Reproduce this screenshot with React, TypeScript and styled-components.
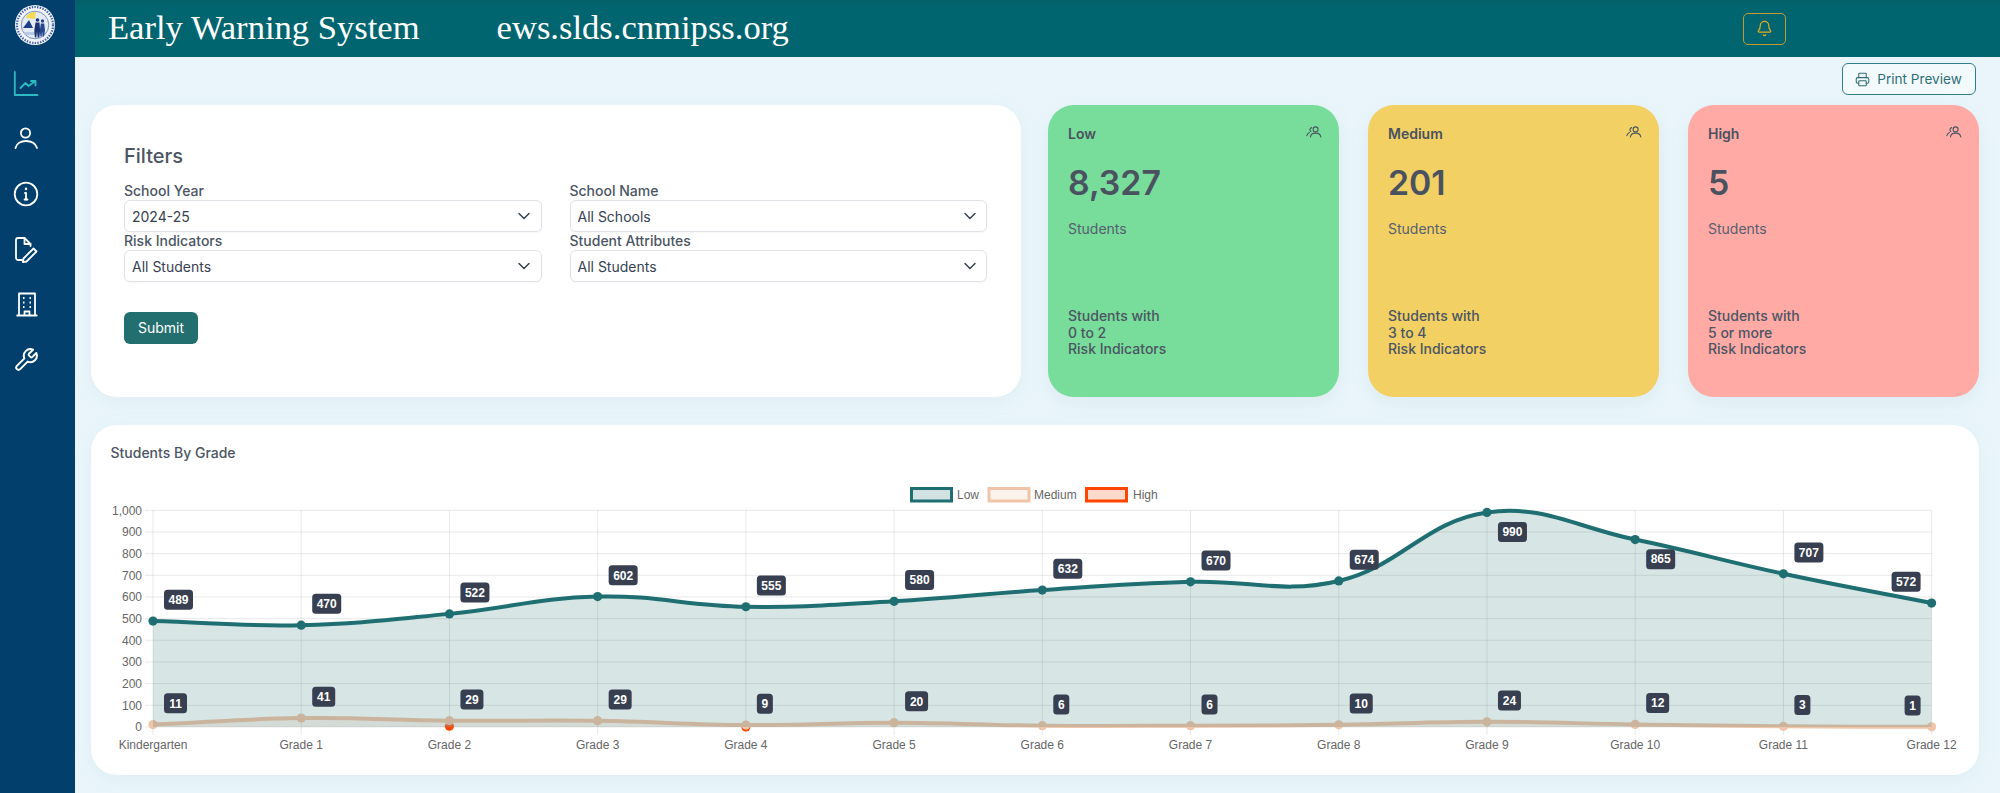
import React from "react";
import styled, { createGlobalStyle } from "styled-components";
import { Bell, Printer, ChevronDown } from "lucide-react";

const Global = createGlobalStyle`
  html, body { margin: 0; padding: 0; height: 100%; }
  body { background: #e9f5fa; font-family: Inter, "Liberation Sans", sans-serif; overflow: hidden; }
`;

const Shell = styled.div`
  display: flex;
  width: 2000px;
  height: 793px;
  background: #e9f5fa;
`;

const Sidebar = styled.aside`
  flex: 0 0 75px;
  background: #023f6d;
  padding-top: 4.5px;
  box-sizing: border-box;
`;

const Seal = styled.svg`
  display: block;
  width: 40px;
  height: 40px;
  margin-left: 15px;
`;

const Nav = styled.nav`
  display: flex;
  flex-direction: column;
  gap: 29.2px;
  margin-top: 26.5px;
  padding-left: 12.5px;
`;

const NavIcon = styled.svg<{ $active?: boolean }>`
  display: block;
  width: 26px;
  height: 26px;
  fill: none;
  stroke: ${(p) => (p.$active ? "#2fb9c0" : "#ffffff")};
  stroke-width: 1.8;
  stroke-linecap: round;
  stroke-linejoin: round;
`;

const Main = styled.main`
  flex: 1;
  min-width: 0;
  display: flex;
  flex-direction: column;
`;

const Header = styled.header`
  height: 57px;
  flex: none;
  display: flex;
  align-items: center;
  background: linear-gradient(180deg, #055f69 0%, #00656f 12%, #00656f 100%);
  padding: 0 214.5px 4px 33px;
  box-sizing: border-box;
`;

const HeaderTitle = styled.span<{ $offset?: number }>`
  font-family: "Liberation Serif", "Times New Roman", serif;
  font-size: 34.6px;
  line-height: 40px;
  color: #ffffff;
  margin-left: ${(p) => p.$offset ?? 0}px;
`;

const BellButton = styled.button`
  margin-left: auto;
  width: 43px;
  height: 32px;
  margin-top: 4px;
  display: flex;
  align-items: center;
  justify-content: center;
  background: transparent;
  border: 1px solid #c39a2c;
  border-radius: 5px;
  color: #e6ad24;
  padding: 0;
`;

const Content = styled.div`
  flex: 1;
  padding: 6px 21px 0 16px;
  display: flex;
  flex-direction: column;
`;

const Toolbar = styled.div`
  height: 42px;
  flex: none;
  display: flex;
  justify-content: flex-end;
  align-items: flex-start;
  padding-right: 3.5px;
`;

const PrintButton = styled.button`
  width: 134px;
  height: 32px;
  display: flex;
  align-items: center;
  justify-content: center;
  gap: 7px;
  background: #f3fafc;
  border: 1px solid #2f7f86;
  border-radius: 6px;
  color: #2e6f76;
  font-family: Inter, "Liberation Sans", sans-serif;
  font-size: 13.6px;
  padding: 0;
`;

const TopRow = styled.div`
  display: flex;
  gap: 29px;
  height: 292px;
  flex: none;
`;

const FilterCard = styled.section`
  flex: 1;
  margin-right: -2px;
  background: #ffffff;
  border-radius: 26px;
  padding: 37px 34px 0 33px;
  box-sizing: border-box;
  box-shadow: 0 4px 20px rgba(120, 170, 190, 0.08);
`;

const FilterTitle = styled.h2`
  margin: 0;
  font-size: 20px;
  line-height: 28px;
  font-weight: 500;
  color: #4b5563;
`;

const FilterGrid = styled.div`
  display: grid;
  grid-template-columns: 1fr 1fr;
  column-gap: 28px;
  margin-top: 12px;
`;

const Field = styled.label`
  display: block;
`;

const FieldLabel = styled.span`
  display: block;
  font-size: 14px;
  line-height: 18px;
  font-weight: 500;
  color: #4b5563;
`;

const SelectBox = styled.div`
  position: relative;
  height: 32px;
  color: #374151;
`;

const Select = styled.select`
  appearance: none;
  width: 100%;
  height: 100%;
  box-sizing: border-box;
  border: 1px solid #e0e3e7;
  border-radius: 6px;
  background: #ffffff;
  padding: 0 28px 0 7px;
  font-family: Inter, "Liberation Sans", sans-serif;
  font-size: 14px;
  color: #374151;
  box-shadow: 0 1px 2px rgba(0, 0, 0, 0.04);
`;

const Chevron = styled(ChevronDown)`
  position: absolute;
  right: 7.5px;
  top: 6px;
  pointer-events: none;
`;

const SubmitButton = styled.button`
  display: block;
  margin-top: 29.5px;
  width: 74px;
  height: 32px;
  background: #236f70;
  border: none;
  border-radius: 6px;
  color: #ffffff;
  font-family: Inter, "Liberation Sans", sans-serif;
  font-size: 14px;
  padding: 0;
`;

const StatCard = styled.section<{ $bg: string }>`
  flex: 0 0 291px;
  height: 292px;
  box-sizing: border-box;
  display: flex;
  flex-direction: column;
  background: ${(p) => p.$bg};
  border-radius: 26px;
  padding: 19px 17px 39px 20px;
  color: #4b5563;
  box-shadow: 0 6px 18px rgba(120, 170, 190, 0.1);
`;

const StatHead = styled.div`
  display: flex;
  justify-content: space-between;
  align-items: flex-start;
  font-size: 14px;
  line-height: 20px;
  font-weight: 600;
  color: #4a5260;
`;

const StatIcon = styled.svg`
  width: 16px;
  height: 12px;
  margin-top: 2px;
  fill: none;
  stroke: #4b5563;
  stroke-width: 1.1;
  stroke-linecap: round;
`;

const StatValue = styled.div`
  margin-top: 19px;
  font-size: 33.8px;
  line-height: 40px;
  font-weight: 600;
  color: #4a5260;
`;

const StatUnit = styled.div`
  margin-top: 16px;
  font-size: 14px;
  line-height: 20px;
  color: #566070;
`;

const StatNote = styled.div`
  margin-top: auto;
  font-size: 14px;
  line-height: 16.7px;
  font-weight: 500;
  color: #4b5563;
`;

const ChartCard = styled.section`
  margin-top: 28px;
  height: 350px;
  flex: none;
  background: #ffffff;
  border-radius: 26px;
  padding-top: 18px;
  box-sizing: border-box;
  box-shadow: 0 4px 20px rgba(120, 170, 190, 0.08);
`;

const ChartTitle = styled.h3`
  margin: 0 0 12px 19.5px;
  font-size: 14px;
  line-height: 20px;
  font-weight: 500;
  color: #4b5563;
`;

const ChartSvg = styled.svg`
  display: block;
  width: 1888px;
  height: 300px;
`;

const AxisText = styled.text`
  font-family: "Liberation Sans", Arial, sans-serif;
  font-size: 12px;
  fill: #666666;
`;

const BadgeText = styled.text`
  font-family: "Liberation Sans", Arial, sans-serif;
  font-size: 12px;
  font-weight: 700;
  fill: #ffffff;
  text-anchor: middle;
`;

/* chart geometry, in page coordinates (the svg's viewBox starts at the card's corner) */
const PLOT = { left: 153, right: 1931.6, top: 510.3, bottom: 727 };
const xAt = (i: number) => PLOT.left + (i * (PLOT.right - PLOT.left)) / 12;
const yAt = (v: number) => PLOT.bottom - (v / 1000) * (PLOT.bottom - PLOT.top);

const GRADES = ["Kindergarten", "Grade 1", "Grade 2", "Grade 3", "Grade 4", "Grade 5", "Grade 6", "Grade 7", "Grade 8", "Grade 9", "Grade 10", "Grade 11", "Grade 12"];
const LOW = [489, 470, 522, 602, 555, 580, 632, 670, 674, 990, 865, 707, 572];
const MEDIUM = [11, 41, 29, 29, 9, 20, 6, 6, 10, 24, 12, 3, 1];
const BADGE_WIDTH: Record<number, number> = { 1: 16, 2: 23, 3: 29 };

type Pt = { x: number; y: number };

function splinePath(values: number[]): string {
  const pts: Pt[] = values.map((v, i) => ({ x: xAt(i), y: yAt(v) }));
  const t = 0.4;
  const ctrl = pts.map((cur, i) => {
    const prev = pts[Math.max(0, i - 1)];
    const next = pts[Math.min(pts.length - 1, i + 1)];
    const d01 = Math.hypot(cur.x - prev.x, cur.y - prev.y);
    const d12 = Math.hypot(next.x - cur.x, next.y - cur.y);
    const sum = d01 + d12 || 1;
    const fa = (t * d01) / sum;
    const fb = (t * d12) / sum;
    return {
      prev: { x: cur.x - fa * (next.x - prev.x), y: cur.y - fa * (next.y - prev.y) },
      next: { x: cur.x + fb * (next.x - prev.x), y: cur.y + fb * (next.y - prev.y) },
    };
  });
  let d = `M${pts[0].x} ${pts[0].y}`;
  for (let i = 1; i < pts.length; i++) {
    d += ` C${ctrl[i - 1].next.x} ${ctrl[i - 1].next.y} ${ctrl[i].prev.x} ${ctrl[i].prev.y} ${pts[i].x} ${pts[i].y}`;
  }
  return d;
}

const closeArea = (line: string) => `${line} L${PLOT.right} ${PLOT.bottom} L${PLOT.left} ${PLOT.bottom} Z`;

function Badge({ value, index, below }: { value: number; index: number; below?: boolean }) {
  const text = value.toString();
  const w = BADGE_WIDTH[text.length];
  const px = xAt(index);
  const py = yAt(value);
  const left = index === 12 ? px - 11 - w : px + 11;
  const cy = below ? py + 19.6 : py - 21.3;
  return (
    <g>
      <rect x={left} y={cy - 10} width={w} height={20} rx={3.5} fill="#373f50" />
      <BadgeText x={left + w / 2} y={cy + 4.3}>{text}</BadgeText>
    </g>
  );
}

function Chart() {
  const lowLine = splinePath(LOW);
  const medLine = splinePath(MEDIUM);
  return (
    <ChartSvg viewBox="91 475 1888 300">
      <g stroke="rgba(0,0,0,0.09)" strokeWidth="1">
        {Array.from({ length: 11 }, (_, i) => (
          <line key={i} x1={PLOT.left - 8} x2={PLOT.right} y1={yAt(i * 100)} y2={yAt(i * 100)} />
        ))}
        {GRADES.map((_, i) => (
          <line key={i} x1={xAt(i)} x2={xAt(i)} y1={PLOT.top} y2={PLOT.bottom + 8} />
        ))}
      </g>
      {Array.from({ length: 11 }, (_, i) => (
        <AxisText key={i} x={142} y={yAt(i * 100) + 4.3} textAnchor="end">
          {i === 10 ? "1,000" : i * 100}
        </AxisText>
      ))}
      {GRADES.map((g, i) => (
        <AxisText key={g} x={xAt(i)} y={749.3} textAnchor="middle">{g}</AxisText>
      ))}

      <circle cx={xAt(2)} cy={726.3} r={4.5} fill="#ff4500" />
      <circle cx={xAt(4)} cy={727} r={4.5} fill="#ff4500" />

      <path d={closeArea(medLine)} fill="rgba(240,196,168,0.2)" />
      <path d={medLine} fill="none" stroke="#f0c4a8" strokeWidth={4} />
      {MEDIUM.map((v, i) => (
        <circle key={i} cx={xAt(i)} cy={yAt(v)} r={4.6} fill="#f0c4a8" />
      ))}

      <path d={closeArea(lowLine)} fill="rgba(31,110,112,0.18)" />
      <path d={lowLine} fill="none" stroke="#1f6f72" strokeWidth={4} />
      {LOW.map((v, i) => (
        <circle key={i} cx={xAt(i)} cy={yAt(v)} r={4.6} fill="#1f6f72" />
      ))}

      <rect x={911.5} y={488.5} width={40} height={12.5} fill="#d2e2e3" stroke="#1f6f72" strokeWidth={3} />
      <AxisText x={957} y={499}>Low</AxisText>
      <rect x={989} y={488.5} width={40} height={12.5} fill="#fcf3ed" stroke="#f0c4a8" strokeWidth={3} />
      <AxisText x={1034} y={499}>Medium</AxisText>
      <rect x={1086.5} y={488.5} width={40} height={12.5} fill="#ffdacc" stroke="#ff4500" strokeWidth={3} />
      <AxisText x={1133} y={499}>High</AxisText>

      {LOW.map((v, i) => (
        <Badge key={i} value={v} index={i} below={v === 990 || v === 865} />
      ))}
      {MEDIUM.map((v, i) => (
        <Badge key={i} value={v} index={i} />
      ))}
    </ChartSvg>
  );
}

function LogoSeal() {
  return (
    <Seal viewBox="0 0 40 40">
      <circle cx="20" cy="20" r="20" fill="#f1f3f8" />
      <circle cx="20" cy="20" r="18" fill="none" stroke="#3f63a6" strokeWidth="2.2" strokeDasharray="1.4 1.3" />
      <circle cx="20" cy="20" r="13.8" fill="#e3ebf5" stroke="#4a6cb0" strokeWidth="0.7" />
      <path d="M11 13a9 7 0 0 1 10-6l-1 7z" fill="#f3dc55" />
      <path d="M8 23l6-8 4 8z" fill="#1e3f86" />
      <path d="M9 27h11v3H10z" fill="#b7c9e2" />
      <circle cx="22.5" cy="15" r="1.8" fill="#1a3372" />
      <path d="M20.5 17.5h4l.6 8-.8 7h-1.6l-.7-6-.7 6h-1.4l-.6-7z" fill="#1a3372" />
      <circle cx="27.5" cy="16" r="1.7" fill="#24468f" />
      <path d="M25.8 18.5h3.4l.8 7-1 6h-1.3l-.6-5-.5 5h-1.2l-.6-6z" fill="#24468f" />
    </Seal>
  );
}

function StatPeople() {
  return (
    <StatIcon viewBox="0 0 16 12">
      <circle cx="9.6" cy="3.4" r="2.5" />
      <path d="M4.4 11c.3-2.6 2.6-3.9 5.2-3.9s4.9 1.3 5.2 3.9" />
      <path d="M5.6 1.6a2.2 2.2 0 0 0-.8 3.9M3.4 6.6C2 7.2 1.1 8.2.9 9.6" />
    </StatIcon>
  );
}

function FilterSelect({ label, value }: { label: string; value: string }) {
  return (
    <Field>
      <FieldLabel>{label}</FieldLabel>
      <SelectBox>
        <Select defaultValue={value}>
          <option>{value}</option>
        </Select>
        <Chevron size={20} strokeWidth={1.8} />
      </SelectBox>
    </Field>
  );
}

const STATS = [
  { name: "Low", value: "8,327", range: "0 to 2", bg: "#78dc9a" },
  { name: "Medium", value: "201", range: "3 to 4", bg: "#f2d064" },
  { name: "High", value: "5", range: "5 or more", bg: "#ffaaa5" },
];

export default function App() {
  return (
    <Shell>
      <Global />
      <Sidebar>
        <LogoSeal />
        <Nav>
          <NavIcon viewBox="0 0 26 26" $active>
            <path d="M1.8 1v23h22.7" />
            <path d="M7.5 17l5-5 3 3 7-5M18 10h4.5v4.5" />
          </NavIcon>
          <NavIcon viewBox="0 0 26 26">
            <circle cx="12.5" cy="7" r="4.6" />
            <path d="M2.5 22C3.5 17.5 8 15 13 15s9.5 2.5 11 7" />
          </NavIcon>
          <NavIcon viewBox="0 0 26 26">
            <circle cx="13" cy="13" r="11.3" />
            <path d="M12 12h1v6.5" />
            <path d="M11.5 18.5h3" />
            <path d="M13 7.8v.2" strokeWidth="2.4" />
          </NavIcon>
          <NavIcon viewBox="0 0 26 26">
            <path d="M17.5 9V7l-6-6H5.2A2.2 2.2 0 0 0 3 3.2v17.6A2.2 2.2 0 0 0 5.2 23H9" />
            <path d="M11.5 1v6h6" />
            <path d="M20.5 11.5l3 3L13.5 24.5l-3.6.6.6-3.6z" />
          </NavIcon>
          <NavIcon viewBox="0 0 26 26">
            <path d="M6 23.5V1.5h16v22M4.2 23.5h19.6M11.5 23.5v-4h5v4" />
            <path d="M10 6h1.5M16.5 6H18M10 10.5h1.5M16.5 10.5H18M10 15h1.5M16.5 15H18" strokeWidth="2.2" strokeLinecap="butt" />
          </NavIcon>
          <NavIcon viewBox="0 0 24 24">
            <path d="M14.7 6.3a1 1 0 0 0 0 1.4l1.6 1.6a1 1 0 0 0 1.4 0l3.77-3.77a6 6 0 0 1-7.94 7.94l-6.91 6.91a2.12 2.12 0 0 1-3-3l6.91-6.91a6 6 0 0 1 7.94-7.94l-3.76 3.76z" />
          </NavIcon>
        </Nav>
      </Sidebar>
      <Main>
        <Header>
          <HeaderTitle>Early Warning System</HeaderTitle>
          <HeaderTitle $offset={77}>ews.slds.cnmipss.org</HeaderTitle>
          <BellButton aria-label="Notifications">
            <Bell size={17} strokeWidth={1.7} />
          </BellButton>
        </Header>
        <Content>
          <Toolbar>
            <PrintButton>
              <Printer size={15} strokeWidth={1.7} />
              Print Preview
            </PrintButton>
          </Toolbar>
          <TopRow>
            <FilterCard>
              <FilterTitle>Filters</FilterTitle>
              <FilterGrid>
                <FilterSelect label="School Year" value="2024-25" />
                <FilterSelect label="School Name" value="All Schools" />
                <FilterSelect label="Risk Indicators" value="All Students" />
                <FilterSelect label="Student Attributes" value="All Students" />
              </FilterGrid>
              <SubmitButton>Submit</SubmitButton>
            </FilterCard>
            {STATS.map((s) => (
              <StatCard key={s.name} $bg={s.bg}>
                <StatHead>
                  {s.name}
                  <StatPeople />
                </StatHead>
                <StatValue>{s.value}</StatValue>
                <StatUnit>Students</StatUnit>
                <StatNote>
                  Students with
                  <br />
                  {s.range}
                  <br />
                  Risk Indicators
                </StatNote>
              </StatCard>
            ))}
          </TopRow>
          <ChartCard>
            <ChartTitle>Students By Grade</ChartTitle>
            <Chart />
          </ChartCard>
        </Content>
      </Main>
    </Shell>
  );
}
